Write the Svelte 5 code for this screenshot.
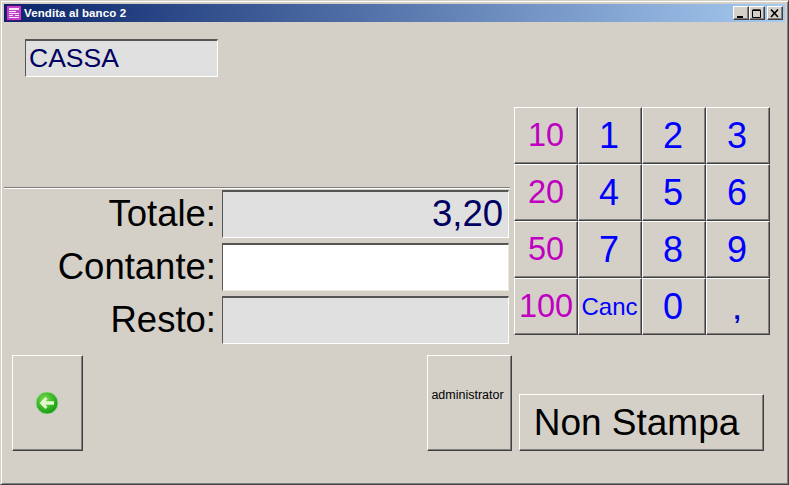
<script>
	const keys = [
		{ label: '10', kind: 'cash' },
		{ label: '1' },
		{ label: '2' },
		{ label: '3' },
		{ label: '20', kind: 'cash' },
		{ label: '4' },
		{ label: '5' },
		{ label: '6' },
		{ label: '50', kind: 'cash' },
		{ label: '7' },
		{ label: '8' },
		{ label: '9' },
		{ label: '100', kind: 'cash' },
		{ label: 'Canc', kind: 'small' },
		{ label: '0' },
		{ label: ',', kind: 'comma' }
	];

	const rows = [
		{ label: 'Totale:', value: '3,20', bg: 'grey' },
		{ label: 'Contante:', value: '', bg: 'white' },
		{ label: 'Resto:', value: '', bg: 'grey' }
	];
</script>

<div class="window">
	<div class="titlebar">
		<svg class="app-icon" width="16" height="16" viewBox="0 0 16 16">
			<rect x="0.5" y="0.5" width="15" height="15" fill="#c040c8" stroke="#401070" />
			<rect x="3" y="3" width="10" height="2" fill="#fbe8fb" />
			<rect x="3" y="6" width="7" height="1" fill="#fbe8fb" />
			<rect x="3" y="8" width="10" height="1" fill="#fbe8fb" />
			<rect x="3" y="10" width="4" height="1" fill="#fbe8fb" />
			<rect x="9" y="10" width="4" height="1" fill="#fbe8fb" />
			<rect x="3" y="12" width="10" height="1" fill="#fbe8fb" />
		</svg>
		<span class="title">Vendita al banco 2</span>
		<div class="caption-buttons">
			<button class="cap" aria-label="Riduci">
				<svg width="10" height="9" viewBox="0 0 10 9"><rect x="1" y="7" width="6" height="2" fill="#000" /></svg>
			</button>
			<button class="cap" aria-label="Ingrandisci">
				<svg width="10" height="9" viewBox="0 0 10 9"><path d="M0.5 1.5h8v7h-8z M0.5 0.8h8" fill="none" stroke="#000" /></svg>
			</button>
			<button class="cap close" aria-label="Chiudi">
				<svg width="10" height="9" viewBox="0 0 10 9"><path d="M1 0.5l7 7.5M8 0.5l-7 7.5" fill="none" stroke="#000" stroke-width="1.6" /></svg>
			</button>
		</div>
	</div>

	<div class="content">
		<div class="top">
			<div class="left">
				<div class="cassa">CASSA</div>
				<div class="divider"></div>
				{#each rows as row}
					<div class="row">
						<span class="row-label">{row.label}</span>
						<div class="field {row.bg}">{row.value}</div>
					</div>
				{/each}
			</div>
			<div class="keypad">
				{#each keys as key}
					<button class="key {key.kind ?? ''}">{key.label}</button>
				{/each}
			</div>
		</div>

		<div class="bottom">
			<button class="btn back" aria-label="Indietro">
				<svg width="24" height="24" viewBox="0 0 24 24">
					<defs>
						<radialGradient id="ball" cx="0.4" cy="0.35" r="0.75">
							<stop offset="0" stop-color="#7fdc50" />
							<stop offset="0.6" stop-color="#30b020" />
							<stop offset="1" stop-color="#109010" />
						</radialGradient>
					</defs>
					<circle cx="12" cy="12" r="11" fill="url(#ball)" stroke="#a8d8a0" stroke-width="0.8" />
					<path d="M4.5 12l6-6 2 2-2 2.2h8.5v3.6h-8.5l2 2.2-2 2z" fill="#e4f8d0" />
				</svg>
			</button>
			<button class="btn admin">administrator</button>
			<button class="btn print">Non Stampa</button>
		</div>
	</div>
</div>

<style>
	:global(body) {
		margin: 0;
		background: #d4d0c8;
	}

	.window {
		box-sizing: border-box;
		width: 789px;
		height: 485px;
		padding: 3px;
		background: #d4d0c8;
		border: 1px solid;
		border-color: #d4d0c8 #404040 #404040 #d4d0c8;
		box-shadow: inset 1px 1px 0 #fff, inset -1px -1px 0 #808080;
		font-family: "Liberation Sans", Arial, sans-serif;
		overflow: hidden;
	}

	.titlebar {
		display: flex;
		align-items: center;
		height: 18px;
		padding: 0 2px 0 2px;
		background: linear-gradient(to right, #0a246a, #a6caf0);
		color: #fff;
	}

	.app-icon {
		flex: none;
	}

	.title {
		margin-left: 2px;
		font-size: 11.5px;
		font-weight: bold;
		letter-spacing: 0.1px;
		white-space: nowrap;
	}

	.caption-buttons {
		display: flex;
		margin-left: auto;
	}

	.cap {
		display: flex;
		align-items: center;
		justify-content: center;
		width: 16px;
		height: 14px;
		padding: 0;
		background: #d4d0c8;
		border: 1px solid;
		border-color: #fff #404040 #404040 #fff;
		box-shadow: inset -1px -1px 0 #808080;
	}

	.cap.close {
		margin-left: 2px;
	}

	.content {
		display: flex;
		flex-direction: column;
	}

	.top {
		display: flex;
		height: 333px;
	}

	.left {
		display: flex;
		flex-direction: column;
		width: 506px;
	}

	.cassa {
		box-sizing: border-box;
		width: 193px;
		height: 38px;
		margin: 17px 0 0 21px;
		padding: 0 0 0 3px;
		background: #e0e0e0;
		border: 1px solid;
		border-color: #555 #fff #fff #555;
		border-top-width: 2px;
		color: #000060;
		font-size: 26.5px;
		line-height: 35px;
	}

	.divider {
		height: 1px;
		margin: 110px 0 1px;
		background: #808078;
		border-bottom: 1px solid #fff;
	}

	.row {
		display: flex;
		align-items: center;
		height: 48px;
		margin-bottom: 5px;
	}

	.row-label {
		width: 212px;
		color: #000;
		font-size: 36.5px;
		text-align: right;
	}

	.field {
		box-sizing: border-box;
		width: 287px;
		height: 48px;
		margin-left: 6px;
		padding-right: 5px;
		border: 1px solid;
		border-color: #555 #fff #fff #555;
		border-top-width: 2px;
		color: #000060;
		font-size: 36.5px;
		line-height: 44px;
		text-align: right;
	}

	.field.grey {
		background: #e0e0e0;
	}

	.field.white {
		background: #fff;
		border-right-color: #ece9d8;
		border-bottom-color: #ece9d8;
	}

	.keypad {
		display: grid;
		grid-template-columns: repeat(4, 64px);
		grid-auto-rows: 57px;
		margin: 85px 0 0 4px;
	}

	.key,
	.btn {
		box-sizing: border-box;
		padding: 0;
		background: #d4d0c8;
		border: 1px solid;
		border-color: #fff #404040 #404040 #fff;
		font-family: inherit;
	}

	.key {
		padding-right: 2px;
		color: #0000ff;
		font-size: 36px;
		box-shadow: inset -1px -1px 0 #808080;
	}

	.key.cash {
		padding-right: 0;
		color: #c000c0;
		font-size: 32.5px;
	}

	.key.small {
		padding-right: 1px;
		font-size: 24px;
	}

	.key.comma {
		padding-top: 8px;
		color: #0000d0;
		font-size: 26px;
		font-weight: bold;
	}

	.bottom {
		display: flex;
		align-items: flex-end;
		height: 96px;
		padding-left: 8px;
	}

	.btn {
		height: 96px;
		box-shadow: inset -1px -1px 0 #808080;
	}

	.back {
		display: flex;
		align-items: center;
		justify-content: center;
		width: 71px;
		padding-right: 2px;
	}

	.admin {
		width: 85px;
		margin-left: 344px;
		padding: 0 4px 16px 0;
		color: #000;
		font-size: 12.5px;
	}

	.print {
		width: 245px;
		height: 57px;
		margin-left: 7px;
		padding-right: 10px;
		color: #000;
		font-size: 37px;
	}
</style>
